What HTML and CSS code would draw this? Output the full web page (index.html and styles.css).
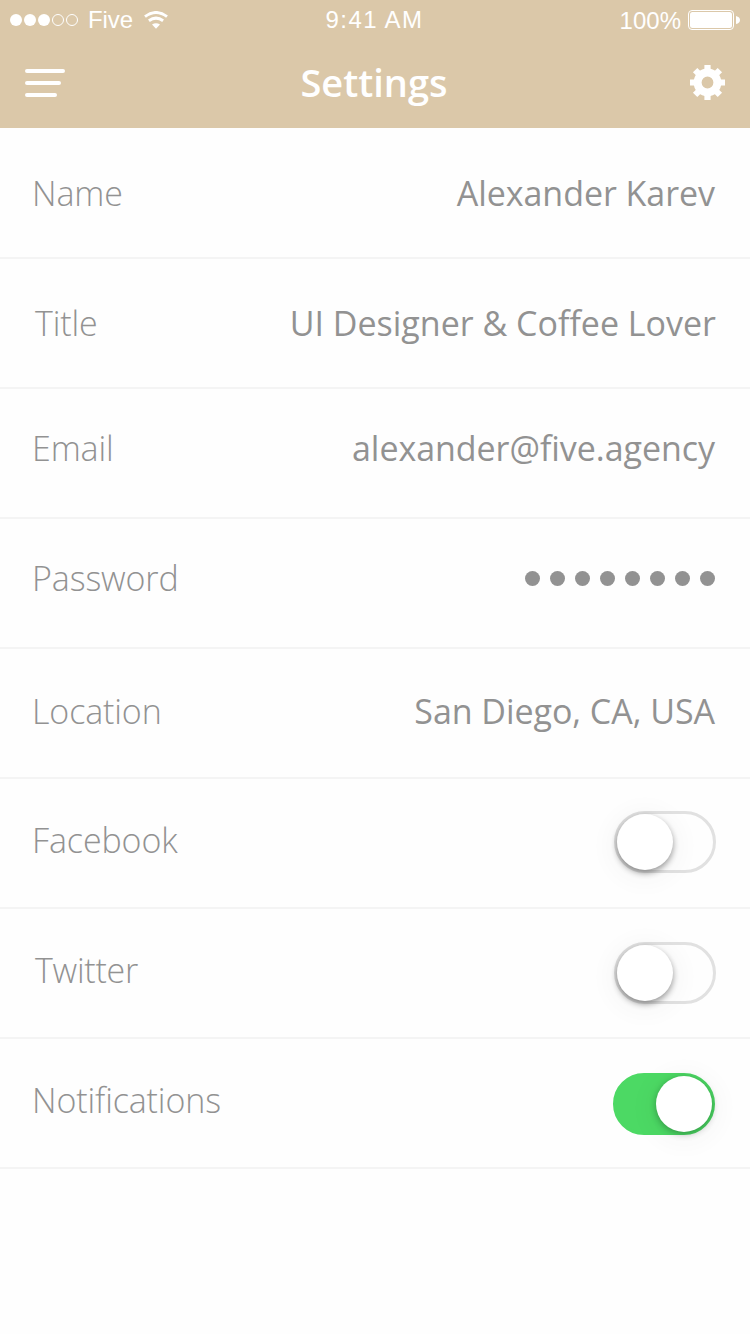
FILE: index.html
```html
<!DOCTYPE html>
<html lang="en">
<head>
<meta charset="utf-8">
<title>Settings</title>
<link rel="stylesheet" href="styles.css">
</head>
<body>
<header class="header">
  <div class="status">
    <div class="status-left">
      <svg class="signal" width="70" height="14" viewBox="0 0 70 14" fill="#fff">
        <circle cx="6" cy="7" r="6"/><circle cx="20" cy="7" r="6"/><circle cx="34" cy="7" r="6"/>
        <g fill="none" stroke="#fff"><circle cx="48" cy="7" r="5.5"/><circle cx="62" cy="7" r="5.5"/></g>
      </svg>
      <span class="carrier">Five</span>
      <svg class="wifi" width="24" height="18" viewBox="0 0 24 18">
        <path d="M1 5.6Q12-2.6 23 5.6M4.9 9.7Q12 4.6 19.1 9.7" fill="none" stroke="#fff" stroke-width="3"/>
        <path d="M8 13.6Q12 11 16 13.6L12 17.8Z" fill="#fff"/>
      </svg>
    </div>
    <span class="time">9:41 AM</span>
    <div class="status-right">
      <span class="percent">100%</span>
      <svg class="battery" width="52" height="20" viewBox="0 0 52 20">
        <rect x=".5" y=".5" width="45" height="19" rx="3.5" fill="none" stroke="#fff"/>
        <rect x="2" y="2" width="42" height="16" rx="2.5" fill="#fff"/>
        <path d="M48 6Q52 7 52 10T48 14Z" fill="#fff"/>
      </svg>
    </div>
  </div>
  <nav class="nav">
    <svg width="40" height="28" viewBox="0 0 40 28" fill="none" stroke="#fff" stroke-width="4" stroke-linecap="round">
      <path d="M2 2H38M2 14H34M2 26H30"/>
    </svg>
    <h1 class="title">Settings</h1>
    <svg width="36" height="36" viewBox="-17.5 -17.5 36 36">
      <g stroke="#fff" stroke-width="6.2">
        <path d="M0-17.5V-10M0 10V17.5M-17.5 0H-10M10 0H17.5"/>
        <path d="M0-17.5V-10M0 10V17.5M-17.5 0H-10M10 0H17.5" transform="rotate(45)"/>
      </g>
      <circle r="9.9" fill="none" stroke="#fff" stroke-width="8"/>
    </svg>
  </nav>
</header>
<main class="list">
  <div class="row row-name"><span class="label">Name</span><span class="value">Alexander Karev</span></div>
  <div class="row row-title"><span class="label">Title</span><span class="value v-title">UI Designer &amp; Coffee Lover</span></div>
  <div class="row row-email"><span class="label">Email</span><span class="value">alexander@five.agency</span></div>
  <div class="row row-password"><span class="label">Password</span><span class="dots"><i></i><i></i><i></i><i></i><i></i><i></i><i></i><i></i></span></div>
  <div class="row row-location"><span class="label">Location</span><span class="value">San Diego, CA, USA</span></div>
  <div class="row row-facebook"><span class="label">Facebook</span><span class="toggle"><span class="knob"></span></span></div>
  <div class="row row-twitter"><span class="label">Twitter</span><span class="toggle"><span class="knob"></span></span></div>
  <div class="row row-notifications"><span class="label">Notifications</span><span class="toggle toggle-on"><span class="knob"></span></span></div>
</main>
</body>
</html>
```
FILE: styles.css
```css
* { box-sizing: border-box; }
body { margin: 0; width: 750px; height: 1334px; background: #fefefe; font-family: "Open Sans", sans-serif; color: #929292; overflow: hidden; }
.header { height: 128px; background: #dbc8a9; color: #fff; }
.status { display: grid; grid-template-columns: 1fr auto 1fr; height: 40px; padding: 0 10px; align-items: start; font: 24px/38px "Liberation Sans", Arial, sans-serif; }
.status-left, .status-right { display: flex; align-items: center; height: 40px; }
.status-right { justify-content: flex-end; }
.carrier { margin-left: 8px; letter-spacing: -.1px; }
.wifi { margin-left: 11px; }
.time { letter-spacing: 1.4px; padding: 1px 1px 0 0; }
.percent { padding-top: 2px; }
.battery { margin-left: 7px; }
.nav { display: flex; justify-content: space-between; align-items: center; height: 86px; padding: 0 24px 0 25px; }
.title { margin: -2px 7px 0 0; font-size: 38px; font-weight: 600; line-height: 50px; }
.row { display: flex; justify-content: space-between; align-items: flex-start; height: 130px; padding: 37px 34px 0 32px; border-bottom: 2px solid #f4f4f4; }
.label, .value { font-size: 34px; line-height: 48px; white-space: nowrap; }
.label { font-weight: 300; letter-spacing: -.12px; }
.value { margin-right: 1px; letter-spacing: -.05px; }
.v-title { margin-right: 0; letter-spacing: 0; }
.row-name { height: 131px; padding-top: 41px; }
.row-title { padding-top: 40px; padding-left: 35px; }
.row-email, .row-password { padding-top: 35px; }
.row-location { padding-top: 38px; }
.row-twitter { padding-left: 35px; }
.row-twitter .label { letter-spacing: -.25px; }
.dots { display: flex; gap: 10px; padding: 17px 1px 0 0; }
.dots i { width: 15px; height: 15px; border-radius: 50%; background: #929292; }
.toggle { width: 102px; height: 62px; border: 3px solid #e1e1e1; border-radius: 31px; margin-top: -5px; display: flex; }
.knob { width: 56px; height: 56px; border-radius: 50%; background: #fff; box-shadow: 0 3px 6px rgba(0,0,0,.4), 0 4px 18px 14px rgba(0,0,0,.018); }
.row-twitter .toggle { margin-top: -4px; }
.toggle-on { border-color: #4cd964; background: #4cd964; justify-content: flex-end; margin: -3px 1px 0 0; }
.toggle-on .knob { box-shadow: 0 2px 7px rgba(0,0,0,.3), 0 4px 18px 14px rgba(0,0,0,.018); }
```
